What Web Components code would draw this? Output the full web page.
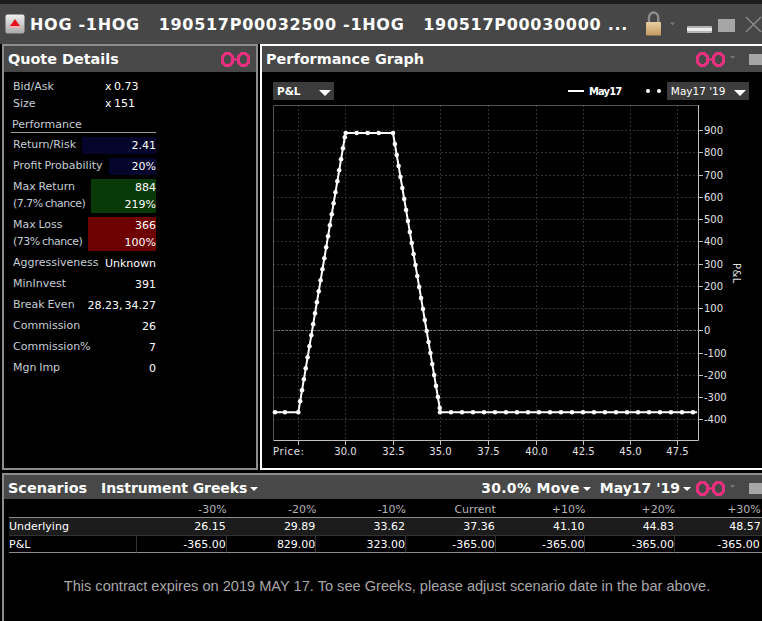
<!DOCTYPE html>
<html>
<head>
<meta charset="utf-8">
<style>
  html, body { margin: 0; background: #000; }
  body { width: 762px; height: 621px; overflow: hidden; font-family: "DejaVu Sans", sans-serif; }
  .main { display: flex; gap: 2px; padding-left: 2px; height: 426px; }
</style>
</head>
<body>
<title-bar>HOG -1HOG&nbsp;&nbsp; 190517P00032500 -1HOG&nbsp;&nbsp; 190517P00030000 ...</title-bar>
<div class="main">
  <quote-details></quote-details>
  <performance-graph></performance-graph>
</div>
<scenario-panel></scenario-panel>

<script>
// Pink chain icon used in all the panel headers
class LinkIcon extends HTMLElement {
    constructor() {
        super();
        this.attachShadow({ mode: 'open' });
        this.shadowRoot.innerHTML = `
            <style>
                :host { display: block; width: 29px; height: 15px; }
                svg { display: block; }
            </style>
            <svg width="29" height="15" viewBox="0 0 29 15" fill="none" stroke="#e8307f" stroke-width="3">
                <path d="M4.500 1.600H8.500L11.500 4.600V10.400L8.500 13.400H4.500L1.500 10.400V4.600z"/>
                <path d="M20.500 1.600H24.500L27.500 4.600V10.400L24.500 13.400H20.500L17.500 10.400V4.600z"/>
                <path d="M11 7.500h7" stroke-width="2.400"/>
            </svg>`;
    }
}
customElements.define('link-icon', LinkIcon);

// Top window bar with the order title and the window buttons
class TitleBar extends HTMLElement {
    constructor() {
        super();
        this.attachShadow({ mode: 'open' });
        this.shadowRoot.innerHTML = `
            <style>
                :host {
                    display: flex;
                    align-items: center;
                    box-sizing: border-box;
                    height: 44px;
                    border-top: 4px solid #1c1c1c;
                    background: #474747;
                    padding: 0 0 0 5px;
                    overflow: hidden;
                }
                .title {
                    margin-left: 5px;
                    width: 616px;
                    flex: none;
                    color: #fff;
                    font: bold 16px "DejaVu Sans", sans-serif;
                    letter-spacing: 0.7px;
                    white-space: pre;
                }
                svg { display: block; flex: none; }
            </style>
            <svg width="20" height="20" viewBox="0 0 20 20">
                <defs><linearGradient id="g" x1="0" y1="0" x2="0" y2="1">
                    <stop offset="0" stop-color="#f0f0f0"/><stop offset="1" stop-color="#a8a8a8"/>
                </linearGradient></defs>
                <rect x="0.5" y="0.5" width="19" height="19" rx="2" fill="url(#g)"/>
                <path d="M10 5 15 12H5z" fill="#e0101c"/>
                <rect x="4" y="12" width="12" height="2" fill="#f4b0b0"/>
            </svg>
            <div class="title"><slot></slot></div>
            <svg width="116" height="28" viewBox="646 10 116 28">
                <defs><linearGradient id="lk" x1="0" y1="0" x2="0" y2="1">
                    <stop offset="0" stop-color="#e8cfa0"/><stop offset="1" stop-color="#c49a60"/>
                </linearGradient></defs>
                <path d="M649 23v-5.500a4.600 5 0 0 1 9.200 0V23" fill="none" stroke="#8e8e8e" stroke-width="2.400"/>
                <rect x="646" y="22" width="15" height="13.500" rx="1" fill="url(#lk)"/>
                <path d="M670 22.500h5l-2.500 3z" fill="#777"/>
                <rect x="687" y="26" width="25" height="7" rx="1" fill="#b4b4b4"/>
                <rect x="687" y="28" width="25" height="3" fill="#ececec"/>
                <rect x="718" y="19" width="17" height="13" fill="#a6a6a6"/>
                <path d="M746 17 761 32M761 17 746 32" stroke="#8f8f8f" stroke-width="1.300"/>
            </svg>`;
    }
}
customElements.define('title-bar', TitleBar);

// Generic panel: dark header with a title slot, an extras slot, and a black body
class AppPanel extends HTMLElement {
    constructor() {
        super();
        this.attachShadow({ mode: 'open' });
        this.shadowRoot.innerHTML = `
            <style>
                :host {
                    display: flex;
                    flex-direction: column;
                    box-sizing: border-box;
                    background: #000;
                    border: 2px solid var(--edge, #8c8c8c);
                    overflow: hidden;
                }
                header {
                    display: flex;
                    align-items: center;
                    flex: none;
                    height: var(--head, 26px);
                    background: #484848;
                    color: #fff;
                    padding: 0 0 0 4px;
                }
                .name { font: bold 14.4px "DejaVu Sans", sans-serif; white-space: nowrap; padding-top: var(--name-top, 0); }
                .extra { flex: 1; display: flex; align-items: center; min-width: 0; }
                main { flex: 1; min-height: 0; }
            </style>
            <header>
                <div class="name"><slot name="title"></slot></div>
                <div class="extra"><slot name="extra"></slot></div>
            </header>
            <main><slot></slot></main>`;
    }
}
customElements.define('app-panel', AppPanel);

// One label / value row in the quote panel
class QuoteRow extends HTMLElement {
    constructor() {
        super();
        this.attachShadow({ mode: 'open' });
        const bar = this.getAttribute('bar') || 'transparent';
        const barLeft = this.getAttribute('bar-left');
        const h = this.getAttribute('h') || 21;
        const lines = (this.getAttribute('value') || '').split('|');
        const subs = (this.getAttribute('label') || '').split('|');
        this.shadowRoot.innerHTML = `
            <style>
                :host {
                    display: block;
                    position: relative;
                    height: ${h}px;
                    font: 11px "DejaVu Sans", sans-serif;
                }
                .bar {
                    position: absolute;
                    top: 0; bottom: 0; right: 0;
                    left: ${barLeft || 0}px;
                    background: ${bar};
                }
                .txt {
                    position: relative;
                    display: grid;
                    grid-template-columns: 1fr auto;
                    height: 100%;
                    grid-auto-rows: 1fr;
                    align-items: center;
                }
                .l { color: #c4ced4; padding-left: 2px; white-space: nowrap; margin-top: -2px; word-spacing: -0.8px; }
                .l.sub { letter-spacing: -0.5px; }
                .v { color: #fff; text-align: right; white-space: nowrap; word-spacing: -1.5px; }
            </style>
            <div class="bar"></div>
            <div class="txt">
                ${lines.map((v, i) => `<span class="l${i ? ' sub' : ''}">${subs[i] || ''}</span><span class="v">${v}</span>`).join('')}
            </div>`;
    }
}
customElements.define('quote-row', QuoteRow);

// Left panel with the quote figures
class QuoteDetails extends HTMLElement {
    constructor() {
        super();
        this.attachShadow({ mode: 'open' });
        this.shadowRoot.innerHTML = `
            <style>
                :host { display: block; flex: none; width: 256px; height: 426px; }
                app-panel { height: 100%; }
                .body { padding: 6px 0 0 7px; width: 145px; }
                .ask { display: grid; grid-template-columns: 94px auto; height: 17px; align-items: center;
                       font: 11px "DejaVu Sans", sans-serif; color: #fff; }
                .ask span:first-child { color: #c4ced4; padding-left: 2px; }
                .ask span:last-child { word-spacing: -1px; }
                .perf { font: 11px "DejaVu Sans", sans-serif; color: #c4ced4; height: 16px; line-height: 17px;
                        margin-top: 4px; padding-left: 1px; border-bottom: 1px solid #a0a0a0; margin-bottom: 4px; }
                .stack { display: flex; flex-direction: column; gap: 4px; margin-bottom: 2px; }
            </style>
            <app-panel>
                <span slot="title">Quote Details</span>
                <link-icon slot="extra" style="margin-left:auto;margin-right:6px"></link-icon>
                <div class="body">
                    <div class="ask"><span>Bid/Ask</span><span>x 0.73</span></div>
                    <div class="ask"><span>Size</span><span>x 151</span></div>
                    <div class="perf">Performance</div>
                    <div class="stack">
                        <quote-row h="17" label="Return/Risk" value="2.41" bar="#05052c" bar-left="71"></quote-row>
                        <quote-row h="17" label="Profit Probability" value="20%" bar="#05052c" bar-left="98"></quote-row>
                        <quote-row h="34" label="Max Return|(7.7% chance)" value="884|219%" bar="#073a06" bar-left="80"></quote-row>
                        <quote-row h="34" label="Max Loss|(73% chance)" value="366|100%" bar="#6e0202" bar-left="77"></quote-row>
                    </div>
                    <quote-row label="Aggressiveness" value="Unknown"></quote-row>
                    <quote-row label="MinInvest" value="391"></quote-row>
                    <quote-row label="Break Even" value="28.23, 34.27"></quote-row>
                    <quote-row label="Commission" value="26"></quote-row>
                    <quote-row label="Commission%" value="7"></quote-row>
                    <quote-row label="Mgn Imp" value="0"></quote-row>
                </div>
            </app-panel>`;
    }
}
customElements.define('quote-details', QuoteDetails);

// Small dark dropdown box in the graph toolbar
class DropBox extends HTMLElement {
    constructor() {
        super();
        this.attachShadow({ mode: 'open' });
        this.shadowRoot.innerHTML = `
            <style>
                :host {
                    display: flex;
                    align-items: center;
                    justify-content: space-between;
                    box-sizing: border-box;
                    height: 18px;
                    background: #3c3c3c;
                    color: #fff;
                    padding: 0 3px 0 4px;
                    font: 10.5px "DejaVu Sans", sans-serif;
                }
                svg { display: block; margin-top: 3px; }
            </style>
            <slot></slot>
            <svg width="12" height="6" viewBox="0 0 12 6"><path d="M0 0h12L6 6z" fill="#fff"/></svg>`;
    }
}
customElements.define('drop-box', DropBox);

// Performance graph panel: toolbar plus the P&L chart drawn on a free canvas
class PerformanceGraph extends HTMLElement {
    constructor() {
        super();
        this.attachShadow({ mode: 'open' });
        this.shadowRoot.innerHTML = `
            <style>
                :host { display: block; flex: none; width: 502px; height: 426px; --edge: #fff; }
                app-panel { height: 100%; border-right: 0; }
                .right { display: flex; align-items: center; margin-left: auto; }
                .tools { display: flex; align-items: center; height: 18px; padding: 10px 0 0 11px; }
                .legend { display: flex; align-items: center; margin-left: 234px; color: #fff;
                          font: bold 10px "DejaVu Sans", sans-serif; letter-spacing: -0.9px; }
                .line { width: 16px; height: 2px; background: #fff; margin-right: 5px; }
                .dots { display: flex; gap: 7px; margin: 0 6px 0 24.5px; }
                .dots i { width: 4px; height: 4px; background: #fff; border-radius: 50%; }
                svg.chart { display: block; margin-top: 2px; }
                text { font: 10px "DejaVu Sans", sans-serif; fill: #e0e0e0; }
            </style>
            <app-panel>
                <span slot="title">Performance Graph</span>
                <div slot="extra" class="right">
                    <link-icon></link-icon>
                    <svg width="37" height="15" viewBox="0 0 37 15">
                        <path d="M5 4h5L7.500 7z" fill="#777"/>
                        <rect x="24" y="2" width="13" height="11" fill="#a6a6a6"/>
                    </svg>
                </div>
                <div class="tools">
                    <drop-box style="width:61px"><b>P&amp;L</b></drop-box>
                    <div class="legend"><i class="line"></i>May17<span class="dots"><i></i><i></i></span></div>
                    <drop-box style="width:82px">May17 '19</drop-box>
                </div>
                <svg class="chart" width="500" height="366" viewBox="262 102 500 366"></svg>
            </app-panel>`;
        this.shadowRoot.querySelector('svg.chart').innerHTML = this.chart();
    }

    chart() {
        const X = [298.5, 345.5, 393.5, 440.5, 488.5, 536.5, 583.5, 630.5, 677.5];
        const xLab = ['', '30.0', '32.5', '35.0', '37.5', '40.0', '42.5', '45.0', '47.5'];
        const yOf = v => 330.3 - v * 0.2225;
        let s = '';
        // dashed grid
        for (const x of X) s += `<path d="M${x} 105V440" stroke="#333" stroke-dasharray="2 2"/>`;
        for (let v = -400; v <= 900; v += 100) {
            const y = Math.round(yOf(v)) + 0.5;
            const col = v === 0 ? '#6a6a6a' : '#333';
            s += `<path d="M273 ${y}H698" stroke="${col}" stroke-dasharray="${v === 0 ? '3 1' : '2 2'}"/>`;
            s += `<path d="M698 ${y}h5" stroke="#c0c0c0"/>`;
            s += `<text x="704" y="${y + 3}">${v}</text>`;
        }
        // frame
        s += `<path d="M273.500 440V105.500H698" fill="none" stroke="#555"/>`;
        s += `<path d="M698.500 105V440.500H273.500" fill="none" stroke="#c0c0c0"/>`;
        for (const x of X) s += `<path d="M${x} 440v5" stroke="#c0c0c0"/>`;
        xLab.forEach((t, i) => { if (t) s += `<text x="${X[i]}" y="455" text-anchor="middle">${t}</text>`; });
        s += `<text x="273" y="455" letter-spacing="0.6">Price:</text>`;
        s += `<text transform="translate(733 263) rotate(90)" letter-spacing="0.4">P&amp;L</text>`;
        // P&L line and its sample dots
        s += `<path d="M274 412.300H298.300L345.500 133H393L440.500 412.300H697" fill="none" stroke="#fff" stroke-width="2"/>`;
        const pts = [[275, 412.3], [285, 412.3]];
        for (let y = 412.3; y > 133; y -= 11) pts.push([298.3 + (412.3 - y) * 0.169, y]);
        for (let x = 345.7; x < 380; x += 11) pts.push([x, 133]);
        for (let y = 133; y < 412; y += 11) pts.push([393 + (y - 133) * 0.17, y]);
        for (let x = 440; x < 695; x += 11) pts.push([x, 412.3]);
        s += pts.map(p => `<circle cx="${p[0]}" cy="${p[1]}" r="2.300" fill="#fff"/>`).join('');
        return s;
    }
}
customElements.define('performance-graph', PerformanceGraph);

// Bottom panel with the scenario table
class ScenarioPanel extends HTMLElement {
    constructor() {
        super();
        this.attachShadow({ mode: 'open' });
        const heads = ['-30%', '-20%', '-10%', 'Current', '+10%', '+20%', '+30%'];
        const under = ['26.15', '29.89', '33.62', '37.36', '41.10', '44.83', '48.57'];
        const pnl = ['-365.00', '829.00', '323.00', '-365.00', '-365.00', '-365.00', '-365.00'];
        const cells = arr => arr.map(t => `<div class="c">${t}</div>`).join('');
        this.shadowRoot.innerHTML = `
            <style>
                :host { display: block; height: 148px; margin-top: 3px; --head: 24px; --name-top: 2px; }
                app-panel { height: 100%; border-right: 0; border-bottom: 0; margin-left: 2px; }
                .bar { flex: 1; display: flex; align-items: center; color: #fff; font: bold 14px "DejaVu Sans", sans-serif; white-space: nowrap; padding-top: 2px; }
                .tri { width: 0; height: 0; border: 4px solid transparent; border-top: 4px solid #fff; border-bottom: 0; margin: 2px 0 0 3px; }
                .grid { display: grid; grid-template-columns: 128px repeat(7, 89.7px); margin-left: 5px; font: 11px "DejaVu Sans", sans-serif; color: #fff; }
                .h { color: #b4b4b4; text-align: right; height: 18px; line-height: 21px; }
                .h:nth-child(8) { padding-right: 4px; }
                .row { display: contents; }
                .c, .n { height: 17px; line-height: 17px; text-align: right; padding-right: 1px; white-space: nowrap; overflow: hidden; }
                .r2 .c { padding-right: 0; }
                .c:last-child, .r2 .c:last-child { padding-right: 4px; }
                .n { text-align: left; padding-left: 0; }
                .r1 > div { background: #1c1c1c; border-top: 1px solid #8c8c8c; height: 17px; }
                .r2 > div { border-top: 1px solid #333; border-bottom: 1px solid #8c8c8c; border-right: 1px solid #333; height: 16px; line-height: 18px; }
                .msg { text-align: center; margin-top: 25px; padding-left: 8px; color: #a8a8a8;
                       font: 14.6px "Liberation Sans", sans-serif; white-space: nowrap; }
            </style>
            <app-panel>
                <span slot="title">Scenarios</span>
                <div slot="extra" class="bar">
                    <span style="margin-left:14px;letter-spacing:-0.1px">Instrument Greeks</span><i class="tri"></i>
                    <span style="margin-left:auto;letter-spacing:0.3px">30.0% Move</span><i class="tri"></i>
                    <span style="margin-left:9px">May17 '19</span><i class="tri"></i>
                    <link-icon style="margin-left:5px"></link-icon>
                    <svg width="37" height="15" viewBox="0 0 37 15" style="flex:none">
                        <path d="M5 4h5L7.500 7z" fill="#777"/>
                        <rect x="24" y="2" width="13" height="11" fill="#a6a6a6"/>
                    </svg>
                </div>
                <div class="grid">
                    <div class="h"></div>${heads.map(t => `<div class="h">${t}</div>`).join('')}
                    <div class="row r1"><div class="n">Underlying</div>${cells(under)}</div>
                    <div class="row r2"><div class="n">P&amp;L</div>${cells(pnl)}</div>
                </div>
                <div class="msg">This contract expires on 2019 MAY 17. To see Greeks, please adjust scenario date in the bar above.</div>
            </app-panel>`;
    }
}
customElements.define('scenario-panel', ScenarioPanel);
</script>
</body>
</html>
